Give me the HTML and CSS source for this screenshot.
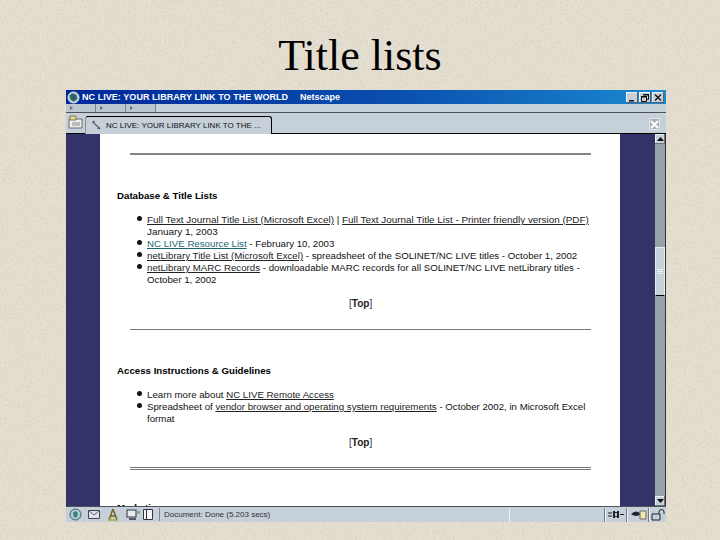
FILE: index.html
```html
<!DOCTYPE html>
<html lang="en">
<head>
<meta charset="utf-8">
<title>Title lists</title>
<link rel="stylesheet" href="styles.css">
</head>
<body>
<div class="slide">
  <h1 class="slide-title">Title lists</h1>
  <div class="window">
    <div class="titlebar">
      <svg class="ico-globe" width="13" height="13" viewBox="0 0 13 13"><circle cx="6.5" cy="6.5" r="5.5" fill="#9fc4c4" stroke="#e8f0f0"/><path d="M3 4.5 6 3 9 4.5 9.5 8 6.5 10 4 8ZM6.5 5v3" fill="#2f6f72" stroke="#123" stroke-width=".6"/></svg>
      <span class="title-main">NC LIVE: YOUR LIBRARY LINK TO THE WORLD</span>
      <span class="title-app">Netscape</span>
      <span class="win-buttons">
        <span class="win-btn"><svg width="12" height="11" viewBox="0 0 12 11"><path d="M3 8h5v1.5H3z" fill="#111"/></svg></span>
        <span class="win-btn"><svg width="12" height="11" viewBox="0 0 12 11"><path d="M4.500 2.500h5v5h-2M2.500 4.500h5v5h-5z" fill="none" stroke="#111"/><path d="M4 2h6v1.500H4zM2 4h6v1.500H2z" fill="#111"/></svg></span>
        <span class="win-btn"><svg width="12" height="11" viewBox="0 0 12 11"><path d="M3 2.500 9 8.500M9 2.500 3 8.500" stroke="#111" stroke-width="1.300"/></svg></span>
      </span>
    </div>
    <div class="toolbar">
      <span class="grip"><i></i></span><span class="grip"><i></i></span><span class="grip"><i></i></span>
    </div>
    <div class="tabrow">
      <svg class="ico-newtab" width="15" height="14" viewBox="0 0 15 14"><path d="M1 4h13v9H1z" fill="#eef0e8" stroke="#667"/><path d="M2 1h6v4H2z" fill="#e9dc8a" stroke="#776"/><path d="M4 8h8M4 10h8" stroke="#889"/></svg>
      <div class="tab">
        <svg width="11" height="11" viewBox="0 0 11 11"><path d="M1.500 1.500 5 5 9 9M3.500 1l-2 2M8.500 7l-2 2" fill="none" stroke="#556" stroke-width="1.100"/></svg>
        <span>NC LIVE: YOUR LIBRARY LINK TO THE ...</span>
      </div>
      <span class="tab-close"><svg width="11" height="11" viewBox="0 0 11 11"><path d="M2 2 9 9M9 2 2 9" stroke="#fff" stroke-width="2"/></svg></span>
    </div>
    <div class="mainrow">
      <div class="side"></div>
      <div class="page">
        <hr class="rule first">
        <h2 class="heading h-db">Database &amp; Title Lists</h2>
        <ul class="list">
          <li class="li-wide"><a href="#">Full Text Journal Title List (Microsoft Excel)</a> | <a href="#">Full Text Journal Title List - Printer friendly version (PDF)</a><br>January 1, 2003</li>
          <li><a href="#" class="teal">NC LIVE Resource List</a> - February 10, 2003</li>
          <li><a href="#">netLibrary Title List (Microsoft Excel)</a> - spreadsheet of the SOLINET/NC LIVE titles - October 1, 2002</li>
          <li><a href="#">netLibrary MARC Records</a> - downloadable MARC records for all SOLINET/NC LIVE netLibrary titles -<br>October 1, 2002</li>
        </ul>
        <p class="top"><span class="top-box">[<b>Top</b>]</span></p>
        <hr class="rule r2">
        <h2 class="heading h-ac">Access Instructions &amp; Guidelines</h2>
        <ul class="list l2">
          <li>Learn more about <a href="#">NC LIVE Remote Access</a></li>
          <li>Spreadsheet of <a href="#">vendor browser and operating system requirements</a> - October 2002, in Microsoft Excel<br>format</li>
        </ul>
        <p class="top t2"><span class="top-box">[<b>Top</b>]</span></p>
        <hr class="rule double">
        <h2 class="heading h-more">Marketing</h2>
      </div>
      <div class="side side-r"></div>
      <div class="scrollbar">
        <span class="sb-btn"><svg width="7" height="4" viewBox="0 0 7 4"><path d="M3.500 0 7 4H0z" fill="#111"/></svg></span>
        <span class="sb-track upper"></span>
        <span class="sb-thumb"><i></i><i></i><i></i></span>
        <span class="sb-track"></span>
        <span class="sb-btn"><svg width="7" height="4" viewBox="0 0 7 4"><path d="M0 0h7L3.500 4z" fill="#111"/></svg></span>
      </div>
    </div>
    <div class="statusbar">
      <span class="st-icons">
        <svg width="13" height="13" viewBox="0 0 13 13"><circle cx="6.500" cy="6.500" r="5.500" fill="#a9cfcf" stroke="#456"/><path d="M4 4.500 6.500 3 9 5 8 9 5 9.500Z" fill="#3e7d80"/></svg>
        <svg width="14" height="11" viewBox="0 0 14 11"><path d="M1.500 1.500h11v8h-11z" fill="#dde3e8" stroke="#445"/><path d="M1.500 1.500 7 6l5.500-4.500" fill="none" stroke="#667"/></svg>
        <svg class="st-a" width="12" height="14" viewBox="0 0 12 14"><path d="M6 1 2 12M6 1l4 11M3 8h6" fill="none" stroke="#6d6420" stroke-width="1.500"/><path d="M1 12h10" stroke="#b9a93e" stroke-width="1.500"/></svg>
        <svg class="st-c" width="15" height="12" viewBox="0 0 15 12"><rect x="1" y="1" width="9" height="7" fill="#e7ebee" stroke="#334"/><path d="M3 10h7" stroke="#334" stroke-width="1.500"/><path d="M11 2h3v3h-3z" fill="#8a8"/></svg>
        <svg width="12" height="13" viewBox="0 0 12 13"><path d="M1.500 1.500h9v10h-9z" fill="#f3f5f6" stroke="#334"/><path d="M4.500 1.500v10" stroke="#334"/></svg>
      </span>
      <span class="st-text">Document: Done (5.203 secs)</span>
      <span class="st-cell wide"></span>
      <span class="st-cell icon"><svg width="16" height="9" viewBox="0 0 16 9"><path d="M0 3h4M0 6h4M12 4.500h4" stroke="#222"/><path d="M5 1h2v7H5zM9 1h2v7H9z" fill="#222"/><path d="M7 2.500h2M7 6.500h2" stroke="#222"/></svg></span>
      <span class="st-cell icon"><svg width="17" height="11" viewBox="0 0 17 11"><path d="M1 5q5-5 10 0-5 4-10 0z" fill="#223"/><path d="M10 2h6v8h-6z" fill="#f1eca8" stroke="#667"/></svg></span>
      <span class="st-cell icon last"><svg width="14" height="12" viewBox="0 0 14 12"><path d="M1 5h8v6H1z" fill="#c8d0d8" stroke="#223"/><path d="M8 5V3a2.500 2.500 0 0 1 5 0v2" fill="none" stroke="#223"/></svg></span>
    </div>
  </div>
</div>
</body>
</html>
```

FILE: styles.css
```css
* { box-sizing: border-box; }
html, body { margin: 0; padding: 0; }
body {
  width: 720px;
  height: 540px;
  overflow: hidden;
  background-color: #e5dfd2;
  background-image: url("data:image/svg+xml,%3Csvg xmlns='http://www.w3.org/2000/svg' width='720' height='540'%3E%3Cfilter id='n'%3E%3CfeTurbulence type='fractalNoise' baseFrequency='.45' numOctaves='3' seed='4'/%3E%3CfeColorMatrix values='0 0 0 0 .45 0 0 0 0 .40 0 0 0 0 .30 1.200 0 0 0 -.5'/%3E%3C/filter%3E%3Crect width='720' height='540' filter='url(%23n)' opacity='.4'/%3E%3C/svg%3E");
  font-family: "Liberation Sans", Arial, sans-serif;
}
.slide { display: flex; flex-direction: column; align-items: center; height: 540px; }
.slide-title {
  margin: 0;
  height: 90px;
  padding-top: 29px;
  font: 400 44px/54px "Liberation Serif", "Times New Roman", serif;
  color: #000;
}
.window {
  width: 600px;
  height: 432px;
  margin-left: 12px;
  display: flex;
  flex-direction: column;
  background: #c6d0d9;
  overflow: hidden;
}
.titlebar {
  height: 14px;
  flex: none;
  display: flex;
  align-items: center;
  padding-left: 1px;
  background: linear-gradient(90deg, #00289a 0%, #0a4fae 55%, #1a8ad0 100%);
  color: #fff;
  font-size: 9px;
  font-weight: 700;
  white-space: nowrap;
}
.ico-globe { flex: none; margin-right: 2px; }
.title-main { width: 218px; flex: none; letter-spacing: .05px; }
.win-buttons { margin-left: auto; display: flex; gap: 1px; padding-right: 2px; }
.win-btn {
  width: 12px; height: 11px;
  background: #c6d0d9;
  box-shadow: inset -1px -1px 0 #55606a, inset 1px 1px 0 #f2f5f7;
  display: block;
}
.win-btn svg { display: block; }
.toolbar {
  height: 9px;
  flex: none;
  display: flex;
  background: #c6d0d9;
  border-bottom: 1px solid #4d5258;
}
.grip {
  width: 30px;
  height: 8px;
  display: flex;
  align-items: center;
  padding-left: 4px;
  background: #bcc6cf;
  border-right: 1px solid #7d858c;
}
.grip i { border-left: 3px solid #666e76; border-top: 2px solid transparent; border-bottom: 2px solid transparent; }
.tabrow {
  height: 21px;
  flex: none;
  display: flex;
  align-items: flex-end;
  padding-left: 2px;
  background: #c6d0d9;
  border-bottom: 1px solid #000;
}
.ico-newtab { margin: 0 0 4px 0; flex: none; }
.tab {
  width: 187px;
  height: 18px;
  margin-left: 2px;
  margin-bottom: -1px;
  display: flex;
  align-items: center;
  gap: 4px;
  padding: 0 0 0 5px;
  background: #c6d0d9;
  border: 1px solid #000;
  border-width: 1px 1px 0 1px;
  border-left-color: #8a9199;
  border-radius: 3px 3px 0 0;
  font-size: 8px;
  color: #111;
  white-space: nowrap;
}
.tab-close {
  margin: 0 6px 3px auto;
  width: 11px; height: 12px;
  background: #a8b2bb;
  box-shadow: inset 0 0 0 1px #dfe5ea;
  display: block;
}
.tab-close svg { display: block; margin-top: 1px; }
.mainrow { flex: 1; min-height: 0; display: flex; overflow: hidden; }
.side { width: 34px; flex: none; background: #33336a; }
.side-r { width: 35px; }
.page {
  width: 520px;
  flex: none;
  background: #fff;
  padding: 19px 29px 0 17px;
  font-size: 9.700px;
  line-height: 12px;
  color: #111;
  overflow: hidden;
  white-space: nowrap;
}
.rule { margin: 0 0 0 13px; height: 2px; border: 0; background: #858585; }
.rule.r2 { height: 1px; background: #777; margin-top: 19px; }
.rule.double { height: 3px; margin-top: 18px; background: #fff; border-top: 1px solid #777; border-bottom: 1px solid #777; }
.heading { margin: 0; font-size: 9.700px; line-height: 12px; font-weight: 700; color: #000; }
.h-db { margin-top: 35px; }
.h-ac { margin-top: 35px; }
.h-more { margin-top: 32px; }
.list { list-style: none; margin: 12px 0 0; padding: 0 0 0 30px; }
.list li::before {
  content: "";
  display: inline-block;
  width: 5px;
  height: 5px;
  margin-left: -10px;
  margin-right: 5px;
  border-radius: 50%;
  background: #111;
  vertical-align: 2px;
}
.li-wide { font-size: 9.900px; }
.list a { color: #222; text-decoration: underline; }
.list a.teal { color: #1d6670; }
.top { margin: 12px 0 0; padding-left: 232px; font-size: 10px; }
.top-box { color: #333; }
.top-box b { color: #222; }
.scrollbar {
  width: 11px;
  flex: none;
  display: flex;
  flex-direction: column;
  background: #98a1a9;
  border-right: 1px solid #333;
}
.sb-btn {
  height: 10px; flex: none;
  display: flex; align-items: center; justify-content: center;
  background: #c6d0d9;
  box-shadow: inset -1px -1px 0 #6a727a, inset 1px 1px 0 #eef2f5;
}
.sb-track { flex: 1; }
.sb-track.upper { flex: none; height: 103px; }
.sb-thumb {
  height: 49px; flex: none;
  display: flex; flex-direction: column; align-items: center; justify-content: center; gap: 1px;
  background: #c6d0d9;
  border: 1px solid #e9eef2;
  border-bottom: 1px solid #000;
}
.sb-thumb i { display: block; width: 6px; height: 1px; background: #eef2f6; }
.statusbar {
  height: 16px;
  flex: none;
  display: flex;
  align-items: center;
  background: #c6d0d9;
  border-top: 1px solid #4d5258;
  font-size: 8px;
  color: #333;
  white-space: nowrap;
}
.st-icons { display: flex; align-items: center; gap: 5px; width: 94px; padding-left: 3px; flex: none; border-right: 1px solid #7d858c; height: 13px; }
.st-a { margin-left: 1px; }
.st-c { margin-left: 2px; margin-right: -4px; }
.st-text { width: 349px; flex: none; padding-left: 4px; }
.st-cell { height: 14px; flex: none; display: flex; align-items: center; justify-content: center; border-left: 1px solid #f0f3f5; border-right: 1px solid #6f777f; }
.st-cell.wide { width: 96px; }
.st-cell.icon { width: 22px; }
.st-cell.last { flex: 1; border-right: 0; }
```
